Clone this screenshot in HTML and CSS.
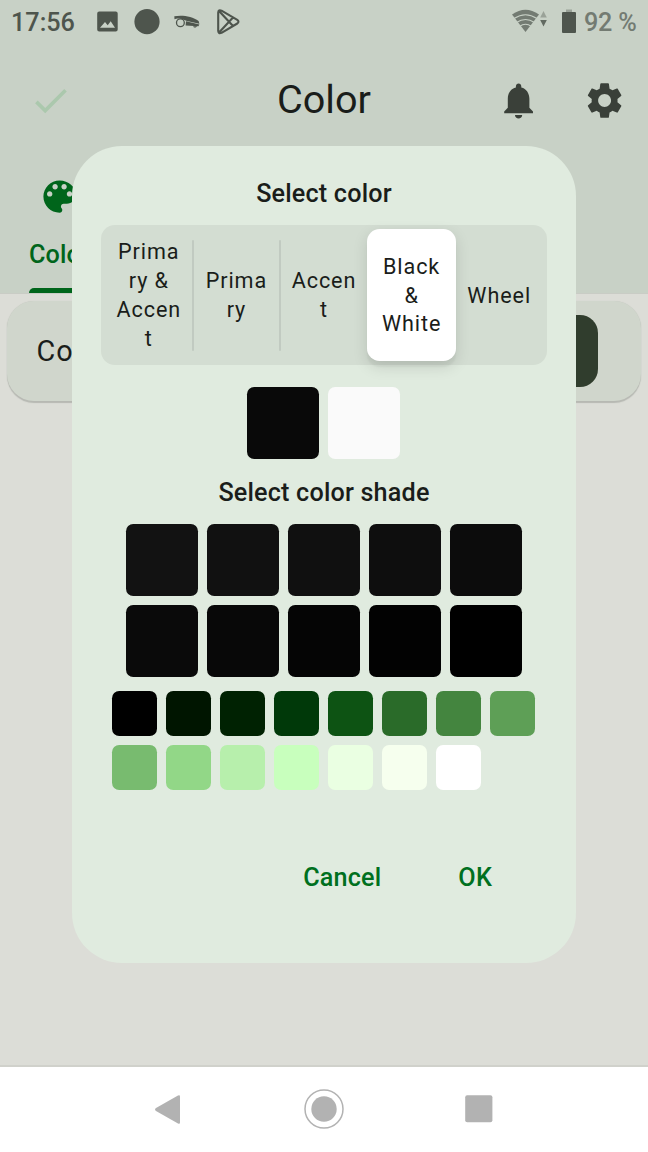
FILE: index.html
```html
<!DOCTYPE html>
<html lang="en">
<head>
<meta charset="utf-8">
<title>Color</title>
<link rel="stylesheet" href="styles.css">
</head>
<body>
<div class="screen">
  <header class="header">
    <div class="status">
      <span class="clock">17:56</span>
      <svg class="status-left" width="150" height="32" viewBox="0 0 150 32">
        <path fill="#4e554d" fill-rule="evenodd" d="M4.200 6.500h16.500a2 2 0 0 1 2 2v16a2 2 0 0 1-2 2h-16.500a2 2 0 0 1-2-2v-16a2 2 0 0 1 2-2zM5 22.800h15l-4.300-6.500-3 4-2.700-3.200z"/>
        <circle cx="52" cy="16.700" r="12.600" fill="#4e554d"/>
        <path fill="#4e554d" d="M79.300 11.300c7-1.500 18-.3 24.300 4.800l.8 2.600-12.400-2.600-6-2.300c-3-.6-5-.4-6.500.4zM91 16.300l13.400 3.200-1 1.700-12.800-.8zM98 21.300h4.200l-1.500 1.100h-1.700z"/>
        <circle cx="85.400" cy="17.700" r="3.900" fill="none" stroke="#4e554d" stroke-width="1.300"/>
        <path fill="none" stroke="#4e554d" stroke-width="2.100" stroke-linejoin="round" d="M123.200 7.500q.3-3.200 3.300-1.900l15.800 9.300q2.300 1.800 0 3.600l-15.800 9.300q-3 1.300-3.300-1.900zM124.500 6.500l13.500 14.500M124.500 27l13.500-14.500"/>
      </svg>
      <svg class="status-right" width="70" height="32" viewBox="0 0 70 32">
        <path fill="#737b72" d="M2 9.500Q15.500 0 29 9.500L15.500 27z"/>
        <path fill="none" stroke="#c8d1c6" stroke-width="1.100" d="M4 13.500q11.500-7.500 23 0M6.500 17.500q9-6 18 0M9.500 21.500q6-4.500 12 0"/>
        <path fill="#9aa298" d="M30.200 12.500h6.600l-3.300-6.500z"/>
        <path fill="#626a61" d="M30.200 15h6.600l-3.300 6.500z"/>
        <path fill="#9aa298" d="M56 4.500h6v3h-6z"/>
        <rect x="52" y="7" width="14" height="21" rx="1" fill="#4e554d"/>
      </svg>
      <span class="battery">92 %</span>
    </div>
    <div class="appbar">
      <svg class="icon" viewBox="0 0 24 24" fill="#abc8ad"><path d="M9 16.170 4.830 12l-1.420 1.410L9 19 21 7l-1.410-1.410z"/></svg>
      <h1 class="title">Color</h1>
      <svg class="icon bell" viewBox="0 0 24 24"><path d="M12 22c1.100 0 2-.9 2-2h-4c0 1.100.89 2 2 2zm6-6v-5c0-3.070-1.640-5.640-4.500-6.320V4c0-.83-.67-1.500-1.500-1.500s-1.500.67-1.500 1.500v.68C7.630 5.360 6 7.920 6 11v5l-2 2v1h16v-1l-2-2z"/></svg>
      <svg class="icon gear" viewBox="0 0 24 24"><path d="M19.140 12.940c.04-.3.060-.61.060-.94 0-.32-.02-.64-.07-.94l2.030-1.580c.18-.14.230-.41.120-.61l-1.920-3.320c-.12-.22-.37-.29-.59-.22l-2.390.96c-.5-.38-1.030-.7-1.620-.94l-.36-2.540c-.04-.24-.24-.41-.48-.41h-3.840c-.24 0-.43.170-.47.410l-.36 2.540c-.59.240-1.130.570-1.620.940l-2.390-.96c-.22-.08-.47 0-.59.220L2.740 8.870c-.12.210-.08.470.120.610l2.030 1.580c-.05.300-.09.630-.09.940s.020.640.070.940l-2.030 1.580c-.18.140-.23.410-.12.610l1.920 3.320c.12.220.370.290.590.220l2.390-.96c.5.380 1.030.700 1.620.940l.36 2.540c.05.240.240.410.480.410h3.840c.24 0 .44-.17.470-.41l.36-2.540c.59-.24 1.130-.56 1.620-.94l2.390.96c.22.080.470 0 .59-.22l1.920-3.320c.12-.22.070-.47-.12-.61l-2.010-1.580zM12 15.600c-1.980 0-3.600-1.620-3.600-3.600s1.620-3.600 3.600-3.600 3.600 1.620 3.600 3.600-1.620 3.600-3.600 3.600z"/></svg>
    </div>
    <div class="tab">
      <svg class="icon" viewBox="0 0 24 24" fill="#00651b"><path d="M12 3c-4.970 0-9 4.030-9 9s4.030 9 9 9c.83 0 1.500-.67 1.500-1.500 0-.39-.15-.74-.39-1.010-.23-.26-.38-.61-.38-.99 0-.83.670-1.500 1.500-1.500H16c2.760 0 5-2.240 5-5 0-4.420-4.030-8-9-8zm-5.500 9c-.83 0-1.500-.67-1.500-1.500S5.670 9 6.500 9 8 9.670 8 10.500 7.330 12 6.500 12zm3-4C8.670 8 8 7.330 8 6.500S8.670 5 9.500 5s1.500.67 1.500 1.500S10.330 8 9.500 8zm5 0c-.83 0-1.500-.67-1.500-1.500S13.670 5 14.500 5s1.500.67 1.500 1.500S15.330 8 14.500 8zm3 4c-.83 0-1.500-.67-1.500-1.500S16.670 9 17.500 9s1.500.67 1.500 1.500-.67 1.500-1.500 1.500z"/></svg>
      <span class="tab-label">Color</span>
      <span class="indicator"></span>
    </div>
  </header>
  <main class="content">
    <div class="card"><span>Color</span><span class="card-swatch"></span></div>
  </main>
  <nav class="nav">
    <svg width="648" height="84" viewBox="0 0 648 84" fill="#b2b2b2">
      <path d="M178 27.500q2-1 2 1v26q0 2-2 1L156 43q-2-1.500 0-3z"/>
      <circle cx="324" cy="41" r="12.700"/><circle cx="324" cy="41" r="19" fill="none" stroke="#b2b2b2" stroke-width="1.500"/>
      <rect x="465.200" y="27.300" width="27.200" height="27" rx="2"/>
    </svg>
  </nav>

  <section class="dialog">
    <h2 class="heading">Select color</h2>
    <div class="segments">
      <div class="segment">Prima<br>ry &amp;<br>Accen<br>t</div>
      <div class="segment ruled">Prima<br>ry</div>
      <div class="segment ruled">Accen<br>t</div>
      <div class="segment selected">Black<br>&amp;<br>White</div>
      <div class="segment">Wheel</div>
    </div>
    <div class="pair"><i class="swatch c-black"></i><i class="swatch c-white"></i></div>
    <h2 class="heading shade-heading">Select color shade</h2>
    <div class="shades">
      <i class="swatch s1"></i><i class="swatch s2"></i><i class="swatch s3"></i><i class="swatch s4"></i><i class="swatch s5"></i>
      <i class="swatch s6"></i><i class="swatch s7"></i><i class="swatch s8"></i><i class="swatch s9"></i><i class="swatch s10"></i>
    </div>
    <div class="tones">
      <i class="swatch t0"></i><i class="swatch t5"></i><i class="swatch t10"></i><i class="swatch t20"></i><i class="swatch t30"></i><i class="swatch t40"></i><i class="swatch t50"></i><i class="swatch t60"></i>
      <i class="swatch t70"></i><i class="swatch t80"></i><i class="swatch t90"></i><i class="swatch t95"></i><i class="swatch t98"></i><i class="swatch t99"></i><i class="swatch t100"></i>
    </div>
    <div class="actions"><span>Cancel</span><span>OK</span></div>
  </section>
</div>
</body>
</html>
```
FILE: styles.css
```css
* { box-sizing: border-box; }
body { margin: 0; font-family: Roboto, "Liberation Sans", sans-serif; color: #1a1d1a; }
h1, h2 { margin: 0; font-weight: 400; }
svg { display: block; flex: none; }
.screen { position: relative; width: 648px; height: 1152px; overflow: hidden; display: flex; flex-direction: column; background: #dcddd7; }
.header { height: 293px; flex: none; background: #c8d1c6; box-shadow: 0 1px 0 #c9ccc5; display: flex; flex-direction: column; }
.status { height: 43px; padding: 5px 7px 0 11px; display: flex; align-items: flex-start; line-height: 36px; font-size: 25.2px; font-weight: 500; color: #4e554d; }
.clock { width: 84px; }
.status-right { margin-left: auto; }
.battery { width: 57px; margin-left: 4px; white-space: nowrap; color: #737b72; letter-spacing: -.2px; }
.appbar { height: 115px; padding: 0 21.600px 0 28.800px; display: flex; align-items: center; }
.icon { width: 43.200px; height: 43.200px; }
.title { flex: 1; text-align: center; font-size: 39.600px; line-height: 50px; padding: 0 0 2px 131px; }
.bell, .gear { fill: #3a4039; }
.bell { margin-left: 52px; }
.gear { margin-left: 43.200px; }
.tab { width: 61px; height: 135px; margin-left: 29px; padding-top: 16.600px; display: flex; flex-direction: column; align-items: center; }
.tab-label { margin-top: 21px; font-size: 25.200px; line-height: 32px; font-weight: 500; letter-spacing: .18px; color: #00651b; }
.indicator { width: 61px; height: 5.400px; margin-top: auto; border-radius: 5.400px 5.400px 0 0; background: #00651b; }
.content { flex: 1; padding: 7.500px 7px 0; }
.card { height: 100px; padding: 0 43px 0 29.500px; border-radius: 27px; display: flex; align-items: center; justify-content: space-between; background: #d0d6cc; box-shadow: 0 1.800px 1px #b7b9b3, 0 0 1px #c1c5be; font-size: 28.800px; letter-spacing: .9px; }
.card-swatch { width: 72px; height: 72px; border-radius: 18px; background: #303d2d; }
.nav { height: 87px; flex: none; padding-top: 1px; border-top: 2px solid #d0d1cb; background: #fff; }
.dialog { position: absolute; left: 72px; top: 146px; width: 504px; height: 817px; border-radius: 50px; background: #e0ebdf; display: flex; flex-direction: column; align-items: center; padding-top: 30px; }
.heading { font-size: 25.200px; font-weight: 500; line-height: 36px; letter-spacing: .18px; }
.segments { width: 446px; height: 140px; margin-top: 13px; padding: 4px; border-radius: 14px; background: #d3ddd2; display: grid; grid-template-columns: repeat(5, 1fr); }
.segment { padding-top: 2px; display: flex; align-items: center; justify-content: center; text-align: center; font-size: 21.600px; line-height: 28.800px; letter-spacing: .9px; position: relative; }
.ruled::before { content: ""; position: absolute; left: -1px; top: 10.500px; bottom: 10.500px; width: 2px; background: #c1cac1; border-radius: 1px; }
.selected { background: #fff; border-radius: 12.600px; margin: 0 -1px; box-shadow: 0 5.400px 14.400px rgba(0,0,0,.12), 0 5.400px 1.800px rgba(0,0,0,.04); }
.pair { display: flex; gap: 9px; margin-top: 22px; padding-right: 1px; }
.swatch { width: 72px; height: 72px; border-radius: 7.200px; }
.shade-heading { margin-top: 15.500px; }
.shades { display: grid; grid-template-columns: repeat(5, 72px); gap: 9px; margin-top: 13.500px; }
.tones { display: grid; grid-template-columns: repeat(8, 45px); gap: 9px; margin-top: 14px; padding-right: .6px; }
.tones .swatch { width: 45px; height: 45px; }
.actions { align-self: stretch; display: flex; justify-content: flex-end; gap: 77px; padding-right: 84px; margin-top: 70px; font-size: 25.200px; line-height: 36px; font-weight: 500; letter-spacing: .18px; color: #007020; }
.c-black { background: #090909; } .c-white { background: #fafafa; }
.s1 { background: #121212; } .s2 { background: #111; } .s3 { background: #101010; } .s4 { background: #0e0e0e; } .s5 { background: #0c0c0c; }
.s6 { background: #0a0a0a; } .s7 { background: #080808; } .s8 { background: #050505; } .s9 { background: #020202; } .s10 { background: #000; }
.t0 { background: #000; } .t5 { background: #001500; } .t10 { background: #002202; } .t20 { background: #003909; } .t30 { background: #0d5313; }
.t40 { background: #2a6b29; } .t50 { background: #44853f; } .t60 { background: #5e9f56; } .t70 { background: #78bb6f; } .t80 { background: #92d787; }
.t90 { background: #b7efac; } .t95 { background: #c8ffbd; } .t98 { background: #eaffe2; } .t99 { background: #f6ffee; } .t100 { background: #fff; }
```
